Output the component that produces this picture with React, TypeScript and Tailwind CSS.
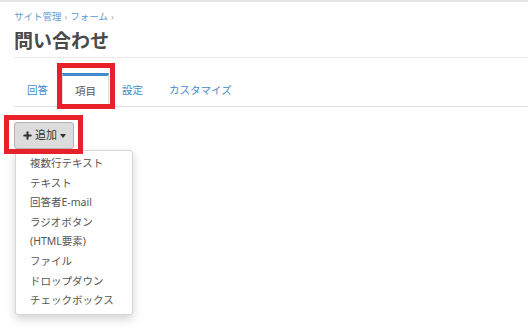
import { Plus } from 'lucide-react'

const items = [
  '複数行テキスト',
  'テキスト',
  '回答者E-mail',
  'ラジオボタン',
  '(HTML要素)',
  'ファイル',
  'ドロップダウン',
  'チェックボックス',
]

const font = { fontFamily: '"Noto Sans", "Noto Sans CJK JP", sans-serif' }

export default function App() {
  return (
    <div
      className="relative w-[528px] h-[329px] overflow-hidden bg-white border-t-2 border-[#e6e6e6] pl-[14px]"
      style={font}
    >
      {/* breadcrumb */}
      <div className="flex items-center h-[14px] mt-[8px] text-[9.5px] leading-[14px]">
        <span className="text-[#5b9bd1]">サイト管理</span>
        <span className="text-[#aaa] mx-[3px] text-[9px]">›</span>
        <span className="text-[#5b9bd1]">フォーム</span>
        <span className="text-[#aaa] mx-[3px] text-[9px]">›</span>
      </div>

      <h1 className="mt-[3px] h-[28px] text-[19px] leading-[28px] font-bold text-[#4a4a4a]">問い合わせ</h1>

      <div className="mt-[2px] border-t border-[#ebebeb]" />

      {/* tabs */}
      <div className="mt-[15px] flex h-[34px] border-b border-[#dddddd] text-[10.5px]">
        <div className="px-[13px] pt-[2px] flex items-center text-[#428bca]">回答</div>
        <div className="relative -mb-px ml-px px-[12px] flex items-center bg-white border-x border-t-[3px] border-[#dddddd] border-t-[#428bca] text-[#555]">
          項目
          <div className="absolute -left-[6px] -right-[7px] -top-[13px] -bottom-[2px] border-[5px] border-[#e8202a]" />
        </div>
        <div className="ml-px px-[12px] pt-[2px] flex items-center text-[#428bca]">設定</div>
        <div className="ml-px px-[13px] pt-[2px] flex items-center text-[#428bca]">カスタマイズ</div>
      </div>

      {/* add button */}
      <div className="relative mt-[15px] w-[60px]">
        <button className="flex items-center justify-center gap-[2px] w-[60px] h-[27px] rounded-[3px] bg-[#dcdcdc] border border-[#b3b3b3] text-[11px] text-[#333]">
          <Plus className="w-[11px] h-[11px]" strokeWidth={4.5} />
          <span>追加</span>
          <span className="ml-[1px] border-x-[3px] border-x-transparent border-t-[4px] border-t-[#333]" />
        </button>
        <div className="absolute -left-[10px] -right-[9px] -top-[7px] -bottom-[5px] border-[5px] border-[#e8202a]" />
      </div>

      {/* dropdown menu */}
      <div className="ml-px mt-px w-[118px] py-[3px] bg-white border border-[#d6d6d6] rounded-[3px] shadow-[0_4px_10px_rgba(0,0,0,0.18)]">
        {items.map((item) => (
          <div key={item} className="pl-[14px] h-[19.6px] leading-[19.6px] text-[10.5px] text-[#555]">
            {item}
          </div>
        ))}
      </div>
    </div>
  )
}
